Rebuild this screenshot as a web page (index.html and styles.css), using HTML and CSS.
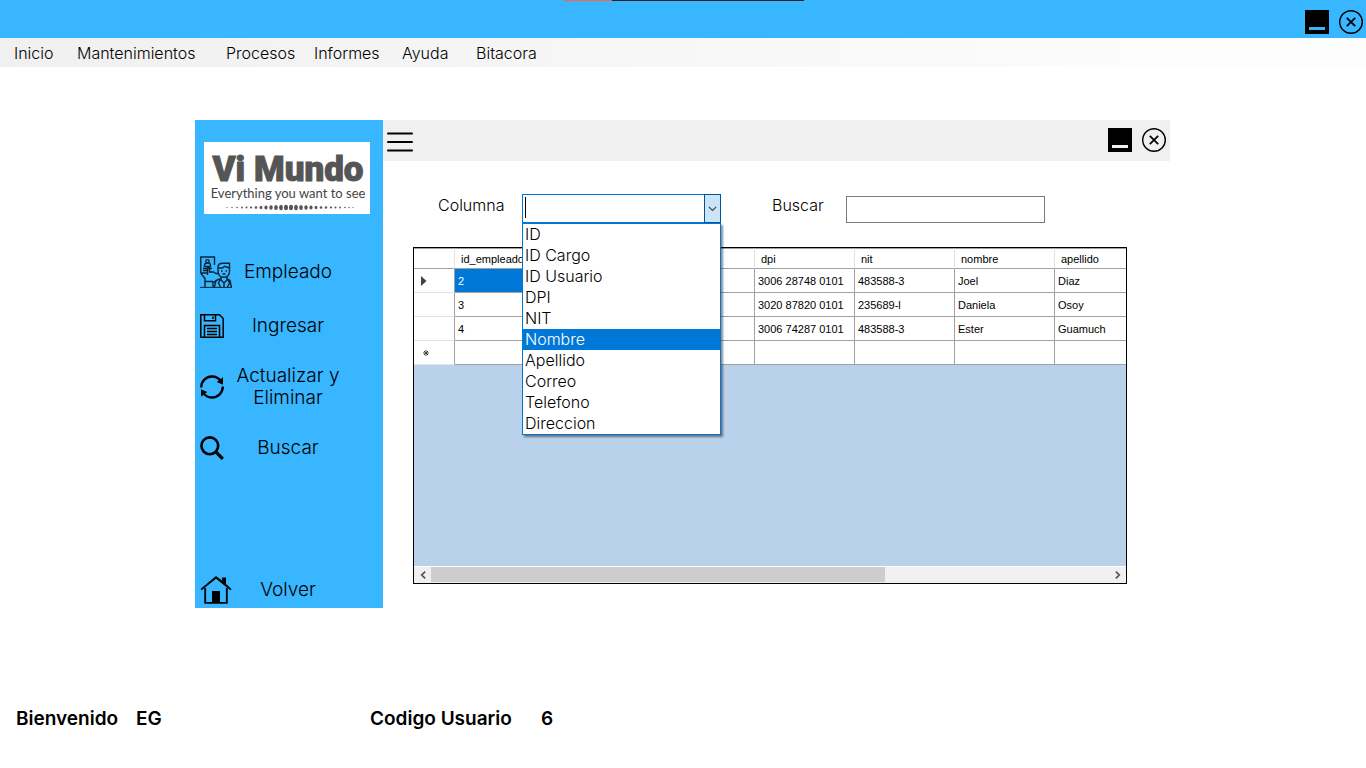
FILE: index.html
```html
<!DOCTYPE html>
<html lang="es">
<head>
<meta charset="utf-8">
<title>Vi Mundo</title>
<link rel="stylesheet" href="styles.css">
</head>
<body>
<svg class="defs" aria-hidden="true">
  <symbol id="i-min" viewBox="0 0 24 24"><path d="M0 0h24v24H0z"/><path d="M4 17h16v3H4z" fill="var(--bar)"/></symbol>
  <symbol id="i-close" viewBox="0 0 24 24"><g fill="none" stroke="#000"><circle cx="12" cy="12" r="11.3" stroke-width="1.4"/><path d="M7.8 7.8l8.4 8.4M16.2 7.8l-8.4 8.4" stroke-width="1.7"/></g></symbol>
</svg>
<div class="app">
  <header class="titlebar">
    <div class="progress"><span></span></div>
    <button class="win-btn" aria-label="Minimizar"><svg><use href="#i-min"/></svg></button>
    <button class="win-btn" aria-label="Cerrar"><svg><use href="#i-close"/></svg></button>
  </header>
  <nav class="menu">
    <a href="#">Inicio</a><a href="#">Mantenimientos</a><a href="#">Procesos</a><a href="#">Informes</a><a href="#">Ayuda</a><a href="#">Bitacora</a>
  </nav>

  <main class="window">
    <aside class="sidebar">
      <svg class="logo" viewBox="0 0 166 72" role="img" aria-label="Vi Mundo">
        <path fill="#fff" d="M0 0h166v72H0z"/>
        <text class="logo-name" x="84" y="39">Vi Mundo</text>
        <text class="logo-tag" x="84" y="56">Everything you want to see</text>
        <g fill="#555">
          <circle cx="23" cy="65.500" r=".6"/><circle cx="28" cy="65.500" r=".7"/><circle cx="33" cy="65.500" r=".8"/><circle cx="38" cy="65.500" r=".9"/><circle cx="42.500" cy="65.500" r="1"/><circle cx="47" cy="65.500" r="1.100"/><circle cx="52" cy="65.500" r="1.300"/><ellipse cx="57" cy="65.500" rx="1.400" ry="1.700"/><ellipse cx="62" cy="65.500" rx="1.600" ry="2"/><ellipse cx="67" cy="65.500" rx="1.700" ry="2.200"/><ellipse cx="72" cy="65.500" rx="1.800" ry="2.500"/><ellipse cx="77" cy="65.500" rx="1.900" ry="2.700"/><ellipse cx="82" cy="65.500" rx="2" ry="2.800"/><ellipse cx="87" cy="65.500" rx="2" ry="2.800"/><ellipse cx="92" cy="65.500" rx="1.900" ry="2.700"/><ellipse cx="97" cy="65.500" rx="1.800" ry="2.500"/><ellipse cx="102" cy="65.500" rx="1.700" ry="2.200"/><ellipse cx="107" cy="65.500" rx="1.600" ry="2"/><ellipse cx="112" cy="65.500" rx="1.400" ry="1.700"/><circle cx="117" cy="65.500" r="1.300"/><circle cx="122" cy="65.500" r="1.200"/><circle cx="127" cy="65.500" r="1.100"/><circle cx="131.500" cy="65.500" r="1"/><circle cx="136" cy="65.500" r=".9"/><circle cx="141" cy="65.500" r=".8"/><circle cx="145" cy="65.500" r=".7"/><circle cx="149" cy="65.500" r=".6"/>
        </g>
      </svg>
      <button class="side-item">
        <svg class="ico-lg" viewBox="0 0 32 32" fill="none" stroke="#0b2436" stroke-width="1.4"><path d="M14.500 9V1H.8v16h6"/><circle cx="7.500" cy="5.300" r="1.700"/><path d="M4.500 10.500V9c0-1.500 1.500-2 3-2s3 .5 3 2v1.500zM3 12.500h9M3 14.500h4M7.500 19v-6.500c0-1.300 2-1.300 2 0V16h4l2.500 1.500h2M1 17.500l4 5V31M16 25l-3 1.500V31M5 25.500h8"/><path d="M18 15v-4c0-3 2-3.700 5-3.700h6.500V15c0 3.500-2 6.200-5.700 6.200S18 18.500 18 15zM18.500 12h4l2-1.700 5 1.700M21 15h1.500M25.500 15H27M22.500 18h3M21 21v3l3 3 3-3v-3M21 22.500l-5 2-1.700 7M27 22.500l3 2 1.500 7M24 27v4M20 24l-1.500 3 2 4M28 24l1.500 3-2 4"/><path d="M0 31.400h32" stroke-width="1"/></svg>
        <span>Empleado</span>
      </button>
      <button class="side-item">
        <svg class="ico" viewBox="0 0 24 24" fill="none" stroke="#000" stroke-width="1.500"><path d="M.8.8h18.700l3.700 3.700v18.700H.8zM4.500 1v5.700h11V1M13 2.500V5M4.500 23V11.500h15V23M7 14.500h10M7 17.500h10M7 20.500h10"/></svg>
        <span>Ingresar</span>
      </button>
      <button class="side-item side-item-tall">
        <svg class="ico" viewBox="0 0 24 24"><g fill="none" stroke="#000" stroke-width="2.300"><path d="M1.200 12.500C1.200 6 6 1.500 12 1.500c4 0 7 1.800 9 5M22.800 11.500c0 6.500-4.800 11-10.800 11-4 0-7-1.800-9-5"/></g><path d="M23 2.300v7.500L16.800 7zM1 21.700v-7.500L7.200 17z"/></svg>
        <span>Actualizar y Eliminar</span>
      </button>
      <button class="side-item">
        <svg class="ico" viewBox="0 0 24 24" fill="none" stroke="#000"><circle cx="9.800" cy="9.800" r="8.400" stroke-width="2.600"/><path d="M15.800 15.800l7 7" stroke-width="3.300"/></svg>
        <span>Buscar</span>
      </button>
      <button class="side-item side-item-last">
        <svg class="ico-lg" viewBox="0 0 32 32"><path d="M22 6.500V3.500h4v6.600l5.500 5-1.100 1.200L16 4.800 1.600 16.300.5 15.100 16 2z"/><path d="M5.200 14v14.800h21.600V14" fill="none" stroke="#000" stroke-width="1.800"/><path d="M12 17h8v12h-8z"/></svg>
        <span>Volver</span>
      </button>
    </aside>

    <section class="pane">
      <div class="pane-bar">
        <button class="burger" aria-label="Menú"><svg viewBox="0 0 26 20" stroke="#000" stroke-width="2" stroke-linecap="round"><path d="M1 1.500h24M1 10h24M1 18.500h24"/></svg></button>
        <button class="win-btn" aria-label="Minimizar"><svg><use href="#i-min"/></svg></button>
        <button class="win-btn" aria-label="Cerrar"><svg><use href="#i-close"/></svg></button>
      </div>
      <form class="filters">
        <label for="columna">Columna</label>
        <div class="combo">
          <select id="columna"><option></option></select>
          <span class="caret"></span>
          <span class="combo-arrow"><svg viewBox="0 0 9 6" fill="none" stroke="#444" stroke-width="1.200"><path d="M.8.8l3.700 3.700L8.200.8"/></svg></span>
          <ul class="options" role="listbox" aria-label="Columna">
            <li role="option">ID</li><li role="option">ID Cargo</li><li role="option">ID Usuario</li><li role="option">DPI</li><li role="option">NIT</li><li role="option" aria-selected="true">Nombre</li><li role="option">Apellido</li><li role="option">Correo</li><li role="option">Telefono</li><li role="option">Direccion</li>
          </ul>
        </div>
        <label class="search-label" for="buscar">Buscar</label>
        <input class="search" id="buscar" type="text">
      </form>
      <div class="grid">
        <div class="grid-view">
          <table>
            <colgroup><col class="col-mark"><col><col><col><col><col><col><col></colgroup>
            <thead><tr><th></th><th>id_empleado</th><th></th><th></th><th>dpi</th><th>nit</th><th>nombre</th><th>apellido</th></tr></thead>
            <tbody>
              <tr><th><svg class="mark" viewBox="0 0 6 10"><path d="M0 0l5.500 5L0 10z" fill="#444"/></svg></th><td class="current">2</td><td></td><td></td><td>3006 28748 0101</td><td>483588-3</td><td>Joel</td><td>Diaz</td></tr>
              <tr><th></th><td>3</td><td></td><td></td><td>3020 87820 0101</td><td>235689-l</td><td>Daniela</td><td>Osoy</td></tr>
              <tr><th></th><td>4</td><td></td><td></td><td>3006 74287 0101</td><td>483588-3</td><td>Ester</td><td>Guamuch</td></tr>
              <tr><th><svg class="mark-new" viewBox="0 0 6 6" stroke="#444" stroke-width="1"><path d="M3 0v6M0 3h6M1 1l4 4M5 1L1 5"/></svg></th><td></td><td></td><td></td><td></td><td></td><td></td><td></td></tr>
            </tbody>
          </table>
        </div>
        <div class="scroll">
          <button type="button" aria-label="Izquierda"><svg viewBox="0 0 6 8"><path d="M5.200.7L1.700 4l3.500 3.300"/></svg></button>
          <div class="track"><div class="thumb"></div></div>
          <button type="button" aria-label="Derecha"><svg viewBox="0 0 6 8"><path d="M.8.7L4.300 4 .8 7.300"/></svg></button>
        </div>
      </div>
    </section>
  </main>

  <footer class="status">
    <span>Bienvenido</span><span>EG</span><span>Codigo Usuario</span><span>6</span>
  </footer>
</div>
</body>
</html>
```

FILE: styles.css
```css
:root {
  --blue: #38b6ff;
  --select: #0078d7;
  --ui: "Century Gothic", Inter, Lato, sans-serif;
}
* { box-sizing: border-box; }
body { margin: 0; background: #fff; color: #000; font: 300 16px/21px var(--ui); }
button { border: 0; padding: 0; background: none; color: inherit; font: inherit; }
svg { display: block; }
.defs { position: absolute; width: 0; height: 0; }
.app { display: flex; flex-direction: column; min-height: 100vh; }

.titlebar {
  --bar: var(--blue);
  position: relative;
  display: flex;
  justify-content: flex-end;
  align-items: center;
  gap: 10px;
  height: 38px;
  padding: 6px 3px 0 0;
  background: var(--blue);
}
.progress { position: absolute; top: 0; left: 50%; width: 240px; height: 1px; margin-left: -119px; background: #222; }
.progress span { display: block; width: 20%; height: 1px; background: #ff6347; }
.win-btn, .win-btn svg { width: 24px; height: 24px; }

.menu {
  display: grid;
  grid-template-columns: 63px 149px 88px 88px 74px auto;
  align-items: center;
  height: 29px;
  padding: 2px 0 0 14px;
  background: linear-gradient(90deg, #f0f0f0, #fdfdfd 90%);
}
.menu a { color: inherit; text-decoration: none; }

.window { display: flex; margin: 53px 196px 0 195px; min-height: 488px; }
.sidebar { display: flex; flex-direction: column; gap: 22px; width: 188px; flex: none; padding: 22px 0 2px; background: var(--blue); }
.logo { width: 166px; height: 72px; margin: 0 0 20px 9px; }
.logo-name { font: 900 35px Roboto, sans-serif; fill: #555; stroke: #555; stroke-width: 1px; text-anchor: middle; }
.logo-tag { font: 400 13px Lato, sans-serif; fill: #444; text-anchor: middle; }
.side-item { display: grid; grid-template-columns: 33px 110px; align-items: center; min-height: 32px; padding-left: 5px; font-size: 19px; line-height: 22px; text-align: center; }
.side-item-tall { min-height: 46px; }
.side-item-last { margin-top: auto; }
.ico { width: 24px; height: 24px; }
.ico-lg { width: 32px; height: 32px; }

.pane { flex: 1; min-width: 0; }
.pane-bar { --bar: #f0f0f0; display: flex; align-items: center; gap: 10px; height: 41px; padding: 0 4px 1px; background: #f0f0f0; }
.burger { margin-right: auto; padding-top: 3px; }
.burger svg { width: 26px; height: 20px; }
.filters { display: flex; padding: 33px 0 0 55px; }
.filters label { width: 84px; line-height: 23px; }
.filters .search-label { width: 74px; margin-left: 51px; }
.combo { position: relative; width: 199px; height: 29px; }
.combo select { width: 100%; height: 100%; appearance: none; border: 1px solid var(--select); border-radius: 0; background: #fff; font: inherit; }
.caret { position: absolute; top: 3px; left: 3px; width: 1px; height: 21px; background: #000; }
.combo-arrow { position: absolute; top: 0; right: 0; display: grid; place-items: center; width: 17px; height: 29px; border: 1px solid #005499; background: #cce4f7; pointer-events: none; }
.combo-arrow svg { width: 9px; height: 6px; }
.options { position: absolute; z-index: 2; top: 29px; left: 0; width: 100%; margin: 0; padding: 0; border: 1px solid var(--select); background: #fff; list-style: none; box-shadow: 2px 2px 2px rgba(0, 0, 0, .45); }
.options li { padding-left: 2px; }
.options [aria-selected] { background: var(--select); color: #fff; }
.search { width: 199px; height: 27px; margin-top: 2px; border: 1px solid #7a7a7a; font: inherit; }

.grid { margin: 24px 43px 0 30px; border: 1px solid #000; background: #b9d1ea; font: 400 11px/14px "Microsoft Sans Serif", "Liberation Sans", sans-serif; }
.grid-view { height: 318px; overflow: hidden; }
table { width: 741px; table-layout: fixed; border-collapse: separate; border-spacing: 0; background: #fff; }
col { width: 100px; }
.col-mark { width: 41px; }
td, th { height: 24px; padding: 0 3px; border: solid #a0a0a0; border-width: 0 1px 1px 0; font-weight: 400; text-align: left; white-space: nowrap; }
thead th { height: 21px; padding-left: 6px; border-right-color: #e3e3e3; border-top: 1px solid #a0a0a0; }
tbody th { padding-left: 7px; border-bottom-color: #e3e3e3; }
.current { background: var(--select); color: #fff; }
.mark { width: 6px; height: 10px; }
.mark-new { width: 6px; height: 6px; margin-left: 2px; }
.scroll { display: flex; height: 17px; border-top: 1px solid #fff; background: #f0f0f0; }
.scroll button { display: grid; place-items: center; width: 17px; }
.scroll svg { width: 6px; height: 8px; fill: none; stroke: #505050; stroke-width: 1.600; }
.track { flex: 1; }
.thumb { width: 67%; height: 15px; background: #cdcdcd; }

.status { display: grid; grid-template-columns: 120px 234px 171px auto; margin-top: 99px; padding-left: 16px; font-size: 19px; line-height: 24px; font-weight: 600; }
```
